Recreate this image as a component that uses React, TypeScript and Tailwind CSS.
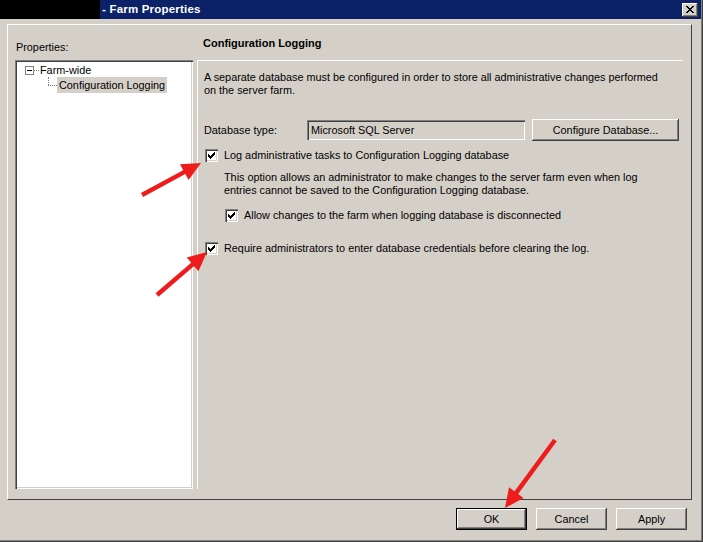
import React from "react";

const raised =
  "shadow-[inset_-1px_-1px_#404040,inset_1px_1px_#ffffff,inset_-2px_-2px_#808080,inset_2px_2px_#d4d0c8]";
const sunken =
  "shadow-[inset_1px_1px_#808080,inset_2px_2px_#404040,inset_-1px_-1px_#ffffff,inset_-2px_-2px_#d4d0c8]";

function CheckBox() {
  return (
    <span className={`w-[13px] h-[13px] bg-white shrink-0 flex items-center justify-center ${sunken}`}>
      <svg width="7" height="7" viewBox="0 0 7 7" shapeRendering="crispEdges">
        <path d="M6 0h1v3h-1v1h-1v1h-1v1h-1v1h-1v-1h-1v-1h-1v-3h1v1h1v1h1v-1h1v-1h1z" fill="#000" />
      </svg>
    </span>
  );
}

function Button({ children, w, primary }: { children: React.ReactNode; w: string; primary?: boolean }) {
  return (
    <div
      className={`${w} h-[22px] bg-[#d4d0c8] flex items-center justify-center ${
        primary ? "border border-black" : ""
      }`}
    >
      <div className={`w-full h-full flex items-center justify-center ${raised}`}>{children}</div>
    </div>
  );
}

// Arrow geometry: shaft from tail to the base of the head, triangle head at tip
function Arrow({ x1, y1, x2, y2 }: { x1: number; y1: number; x2: number; y2: number }) {
  const dx = x2 - x1;
  const dy = y2 - y1;
  const len = Math.hypot(dx, dy);
  const ux = dx / len;
  const uy = dy / len;
  const headLen = 19;
  const half = 9;
  const bx = x2 - ux * headLen;
  const by = y2 - uy * headLen;
  const px = -uy;
  const py = ux;
  const pts = `${x2},${y2} ${bx + px * half},${by + py * half} ${bx - px * half},${by - py * half}`;
  return (
    <g>
      <line x1={x1} y1={y1} x2={bx + ux * 2} y2={by + uy * 2} stroke="#ee1c1c" strokeWidth={4.5} />
      <polygon points={pts} fill="#ee1c1c" />
    </g>
  );
}

export default function App() {
  return (
    <div className="relative w-[703px] h-[542px] overflow-hidden bg-[#d4d0c8] flex flex-col font-['Liberation_Sans',Arial,sans-serif] text-[10.85px] text-black leading-[13px] shadow-[inset_-1px_-1px_#404040,inset_-2px_-2px_#808080]">
      {/* title bar */}
      <div className="h-[19px] mr-[2px] bg-[#0b2269] flex items-center shrink-0">
        <div className="w-[100px] h-full bg-black" />
        <span className="pl-[2px] text-white font-bold text-[11.5px] tracking-[0.2px]">- Farm Properties</span>
        <div className={`ml-auto mr-[3px] w-[16px] h-[14px] bg-[#d4d0c8] flex items-center justify-center ${raised}`}>
          <svg width="8" height="7" viewBox="0 0 8 7" shapeRendering="crispEdges">
            <path
              d="M0 0h2v1h1v1h2v-1h1v-1h2v1h-1v1h-1v1h-1v1h1v1h1v1h1v1h-2v-1h-1v-1h-2v1h-1v1h-2v-1h1v-1h1v-1h1v-1h-1v-1h-1v-1h-1z"
              fill="#000"
            />
          </svg>
        </div>
      </div>

      {/* body */}
      <div className="flex-1 flex flex-col pl-[7px] pr-[11px] pt-[5px]">
        <div className="h-[476px] border-t border-l border-t-white border-l-white border-r border-b border-r-[#404040] border-b-[#404040] flex">
          {/* left: tree */}
          <div className="flex flex-col pl-[7px] pt-[16px]">
            <div className="h-[13px] pl-[1px]">Properties:</div>
            <div className={`mt-[6px] w-[178px] h-[429px] bg-white relative ${sunken}`}>
              <div className="flex items-center h-[13px] mt-[4px] ml-[10px]">
                <span className="w-[9px] h-[9px] border border-[#808080] bg-white flex items-center justify-center">
                  <span className="w-[5px] h-px bg-black" />
                </span>
                <span className="w-[5px] border-t border-dotted border-[#808080]" />
                <span className="ml-[1px]">Farm-wide</span>
              </div>
              <div className="flex ml-[33px]">
                <div className="flex flex-col">
                  <span className="h-[8px] border-l border-dotted border-[#808080]" />
                  <span className="w-[9px] border-t border-l border-dotted border-[#808080] h-[1px]" />
                </div>
                <span className="h-[16px] px-[2px] bg-[#d4d0c8] flex items-center">Configuration Logging</span>
              </div>
            </div>
          </div>

          {/* right: settings page */}
          <div className="flex-1 flex flex-col ml-[4px] pt-[12px]">
            <div className="h-[13px] pl-[6px] font-bold text-[11px]">Configuration Logging</div>
            <div className="mt-[10px] mr-[8px] h-[429px] border-t border-l border-white pl-[6px] pt-[10px] flex flex-col">
              <p>
                A separate database must be configured in order to store all administrative changes performed
                <br />
                on the server farm.
              </p>

              <div className="flex items-center mt-[22px]">
                <span className="w-[103px]">Database type:</span>
                <div className={`w-[218px] h-[20px] flex items-center pl-[4px] ${sunken}`}>Microsoft SQL Server</div>
                <div className="ml-[7px]">
                  <Button w="w-[147px]">Configure Database...</Button>
                </div>
              </div>

              <div className="flex items-center mt-[8px] ml-[1px] gap-[6px]">
                <CheckBox />
                <span>Log administrative tasks to Configuration Logging database</span>
              </div>

              <p className="ml-[20px] mt-[9px]">
                This option allows an administrator to make changes to the server farm even when log
                <br />
                entries cannot be saved to the Configuration Logging database.
              </p>

              <div className="flex items-center mt-[12px] ml-[21px] gap-[6px]">
                <CheckBox />
                <span>Allow changes to the farm when logging database is disconnected</span>
              </div>

              <div className="flex items-center mt-[20px] ml-[1px] gap-[6px]">
                <CheckBox />
                <span>Require administrators to enter database credentials before clearing the log.</span>
              </div>
            </div>
          </div>
        </div>

        {/* dialog buttons */}
        <div className="flex justify-end gap-[9px] mt-[8px] pr-[5px]">
          <Button w="w-[71px]" primary>
            OK
          </Button>
          <Button w="w-[71px]">Cancel</Button>
          <Button w="w-[71px]">Apply</Button>
        </div>
      </div>

      {/* annotation arrows */}
      <svg className="absolute inset-0 pointer-events-none" width="703" height="542">
        <Arrow x1={142} y1={195} x2={201} y2={163} />
        <Arrow x1={157} y1={295} x2={207} y2={252} />
        <Arrow x1={555} y1={440} x2={505} y2={508} />
      </svg>
    </div>
  );
}
